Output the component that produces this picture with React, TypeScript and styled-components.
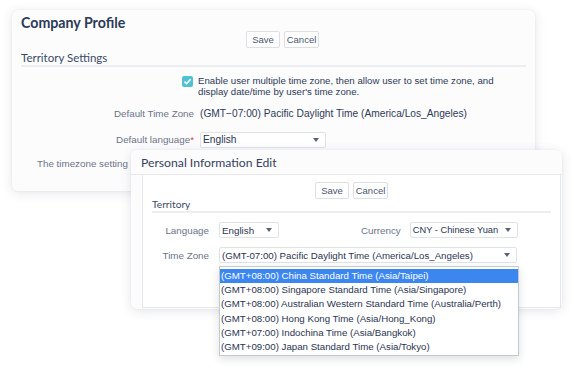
import React from "react";
import styled, { createGlobalStyle } from "styled-components";

const Global = createGlobalStyle`
  html, body { margin: 0; padding: 0; background: #ffffff; }
  body { font-family: "Liberation Sans", Arial, sans-serif; }
  * { box-sizing: border-box; }
`;

const Stage = styled.div`
  position: relative;
  width: 574px;
  height: 369px;
  overflow: hidden;
  background: #ffffff;
`;

const Window = styled.div<{ $left: number; $top: number; $w: number; $h: number }>`
  position: absolute;
  left: ${(p) => p.$left}px;
  top: ${(p) => p.$top}px;
  width: ${(p) => p.$w}px;
  height: ${(p) => p.$h}px;
  background: #fcfcfd;
  border-radius: 6px;
  box-shadow: 0 2px 12px rgba(40, 50, 80, 0.12), 0 0 2px rgba(40, 50, 80, 0.08);
  display: flex;
  flex-direction: column;
`;

const PageTitle = styled.h1`
  margin: 0;
  padding: 4px 0 0 9px;
  font-family: "Lato", "Liberation Sans", sans-serif;
  font-size: 14.2px;
  font-weight: 700;
  color: #2b3a57;
  line-height: 18px;
`;

const ButtonRow = styled.div<{ $pad: number; $top: number }>`
  display: flex;
  gap: 4px;
  padding-left: ${(p) => p.$pad}px;
  margin-top: ${(p) => p.$top}px;
`;

const Btn = styled.button<{ $w: number }>`
  width: ${(p) => p.$w}px;
  height: 17px;
  padding: 0;
  background: #ffffff;
  border: 1px solid #dcdfe4;
  border-radius: 2px;
  font-family: "Liberation Sans", Arial, sans-serif;
  font-size: 9.5px;
  color: #4a5670;
  line-height: 15px;
`;

const SectionTitle = styled.div<{ $size: number; $lh: number; $top: number }>`
  margin: ${(p) => p.$top}px 9px 0 9px;
  padding-bottom: 1px;
  border-bottom: 2px solid #eceef1;
  font-family: "Lato", "Liberation Sans", sans-serif;
  font-size: ${(p) => p.$size}px;
  color: #3b4a66;
  line-height: ${(p) => p.$lh}px;
`;

const FormGrid = styled.div`
  display: grid;
  grid-template-columns: 182px 1fr;
  column-gap: 6px;
  align-items: center;
  margin-top: 8px;
`;

const CheckCell = styled.div`
  grid-column: 2;
  display: flex;
  align-items: flex-start;
  gap: 5px;
  margin-left: -18px;
`;

const CheckBox = styled.span`
  flex: none;
  width: 11px;
  height: 11px;
  margin-top: 1px;
  border-radius: 2px;
  background: #4fc1d3;
  display: flex;
  align-items: center;
  justify-content: center;
`;

const CheckText = styled.div`
  font-size: 9.7px;
  line-height: 11px;
  color: #2f3a55;
  width: 310px;
`;

const Label = styled.div<{ $mt?: number }>`
  grid-column: 1;
  text-align: right;
  font-size: 9.8px;
  line-height: 12px;
  color: #6b7487;
  margin-top: ${(p) => p.$mt ?? 0}px;
`;

const Value = styled.div<{ $mt?: number }>`
  grid-column: 2;
  font-size: 10.2px;
  line-height: 12px;
  color: #2f3a55;
  margin-top: ${(p) => p.$mt ?? 0}px;
`;

const Req = styled.span`
  color: #e0403a;
`;

const Select = styled.div<{ $w: number; $fs?: number }>`
  width: ${(p) => p.$w}px;
  height: 16px;
  border: 1px solid #dfe2e7;
  background: #ffffff;
  border-radius: 2px;
  display: flex;
  align-items: center;
  justify-content: space-between;
  padding: 0 6px 0 2px;
  font-size: ${(p) => p.$fs ?? 10.2}px;
  white-space: nowrap;
  color: #2a3450;
`;

const Caret = styled.span`
  flex: none;
  width: 0;
  height: 0;
  border-left: 3px solid transparent;
  border-right: 3px solid transparent;
  border-top: 4px solid #5a6275;
`;

const Note = styled.div`
  margin: 10px 0 0 25px;
  width: 94px;
  overflow: hidden;
  font-size: 9.8px;
  line-height: 12px;
  color: #6b7487;
  white-space: nowrap;
`;

const WinHeader = styled.div`
  height: 25px;
  flex: none;
  padding-left: 10px;
  display: flex;
  align-items: center;
  font-family: "Lato", "Liberation Sans", sans-serif;
  font-size: 12.2px;
  color: #36425d;
  border-bottom: 1px solid #e6e8ec;
  border-radius: 6px 6px 0 0;
  background: #fcfcfd;
`;

const WinBody = styled.div`
  flex: 1;
  margin: 0 1px 1px 11px;
  border: 1px solid #e6e8ec;
  border-top: none;
  background: #ffffff;
  display: flex;
  flex-direction: column;
`;

const EditGrid = styled.div`
  display: grid;
  grid-template-columns: 66px 190px 1fr;
  column-gap: 10px;
  row-gap: 9px;
  align-items: center;
  margin-top: 9px;
`;

const EditLabel = styled.div`
  text-align: right;
  font-size: 9.8px;
  color: #6b7487;
  white-space: nowrap;
`;

const CurrencyCell = styled.div`
  display: flex;
  align-items: center;
  gap: 9px;
  justify-self: start;
  margin-left: -58px;
`;

const SpanCell = styled.div`
  grid-column: 2 / 4;
  position: relative;
`;

const DropList = styled.ul`
  position: absolute;
  left: 0;
  top: 19px;
  width: 300px;
  margin: 0;
  padding: 2px 0 1px;
  list-style: none;
  background: #ffffff;
  border: 1px solid #c5c9d0;
  box-shadow: 0 3px 8px rgba(30, 40, 60, 0.15);
  z-index: 3;
`;

const DropItem = styled.li<{ $active?: boolean }>`
  height: 14.2px;
  line-height: 14px;
  padding-left: 1px;
  font-size: 9.7px;
  white-space: nowrap;
  color: ${(p) => (p.$active ? "#ffffff" : "#2a3450")};
  background: ${(p) => (p.$active ? "#3c86ef" : "transparent")};
`;

const zones = [
  "(GMT+08:00) China Standard Time (Asia/Taipei)",
  "(GMT+08:00) Singapore Standard Time (Asia/Singapore)",
  "(GMT+08:00) Australian Western Standard Time (Australia/Perth)",
  "(GMT+08:00) Hong Kong Time (Asia/Hong_Kong)",
  "(GMT+07:00) Indochina Time (Asia/Bangkok)",
  "(GMT+09:00) Japan Standard Time (Asia/Tokyo)",
];

export default function App() {
  return (
    <Stage>
      <Global />
      <Window $left={12} $top={10} $w={523} $h={181}>
        <PageTitle>Company Profile</PageTitle>
        <ButtonRow $pad={234} $top={-1}>
          <Btn $w={34}>Save</Btn>
          <Btn $w={35}>Cancel</Btn>
        </ButtonRow>
        <SectionTitle $size={11.5} $lh={13} $top={3}>Territory Settings</SectionTitle>
        <FormGrid>
          <CheckCell>
            <CheckBox>
              <svg width="9" height="9" viewBox="0 0 9 9">
                <path d="M1.5 4.6 L3.6 6.7 L7.6 2.2" fill="none" stroke="#fff" strokeWidth="1.6" />
              </svg>
            </CheckBox>
            <CheckText>
              Enable user multiple time zone, then allow user to set time zone, and display date/time by user's time zone.
            </CheckText>
          </CheckCell>
          <Label $mt={11}>Default Time Zone</Label>
          <Value $mt={11}>(GMT−07:00) Pacific Daylight Time (America/Los_Angeles)</Value>
          <Label $mt={12}>
            Default language<Req>*</Req>
          </Label>
          <Value $mt={12}>
            <Select $w={126}>
              English <Caret />
            </Select>
          </Value>
        </FormGrid>
        <Note>The timezone setting for users</Note>
      </Window>

      <Window $left={131} $top={150} $w={431} $h={159}>
        <WinHeader>Personal Information Edit</WinHeader>
        <WinBody>
          <ButtonRow $pad={172} $top={7}>
            <Btn $w={34}>Save</Btn>
            <Btn $w={35}>Cancel</Btn>
          </ButtonRow>
          <SectionTitle $size={10.2} $lh={11} $top={0}>Territory</SectionTitle>
          <EditGrid>
            <EditLabel>Language</EditLabel>
            <Select $w={60} $fs={9.8}>
              English <Caret />
            </Select>
            <CurrencyCell>
              <EditLabel>Currency</EditLabel>
              <Select $w={108} $fs={9.3}>
                CNY - Chinese Yuan <Caret />
              </Select>
            </CurrencyCell>
            <EditLabel>Time Zone</EditLabel>
            <SpanCell>
              <Select $w={298} $fs={9.7}>
                (GMT-07:00) Pacific Daylight Time (America/Los_Angeles) <Caret />
              </Select>
              <DropList>
                {zones.map((z, i) => (
                  <DropItem key={z} $active={i === 0}>
                    {z}
                  </DropItem>
                ))}
              </DropList>
            </SpanCell>
          </EditGrid>
        </WinBody>
      </Window>
    </Stage>
  );
}
